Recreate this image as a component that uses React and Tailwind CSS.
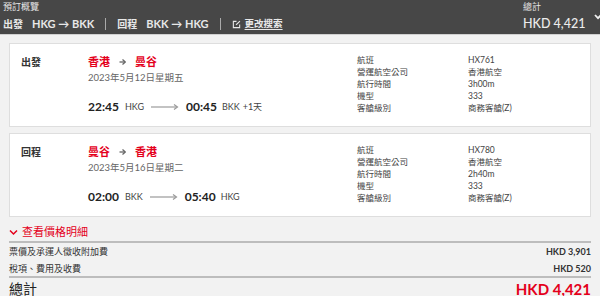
import React from "react";

const font = { fontFamily: 'Lato, "Noto Sans CJK TC", sans-serif' };

function Arrow() {
  return (
    <svg width="28" height="8" viewBox="0 0 28 8" className="mx-[7px]">
      <line x1="0" y1="4" x2="26" y2="4" stroke="#9a9a9a" strokeWidth="1.2" />
      <path d="M23 1.5 L26.5 4 L23 6.5" fill="none" stroke="#9a9a9a" strokeWidth="1.2" />
    </svg>
  );
}

function SmallArrow() {
  return (
    <svg width="7" height="8" viewBox="0 0 7 8" className="mx-[9px]">
      <line x1="0.5" y1="4" x2="6" y2="4" stroke="#666" strokeWidth="1.3" />
      <path d="M3.5 1.5 L6.3 4 L3.5 6.5" fill="none" stroke="#666" strokeWidth="1.3" />
    </svg>
  );
}

function Card({ label, from, to, date, dep, depCode, arr, arrCode, extra, flight, duration }) {
  const rows = [
    ["航班", flight],
    ["營運航空公司", "香港航空"],
    ["航行時間", duration],
    ["機型", "333"],
    ["客艙級別", "商務客艙(Z)"],
  ];
  return (
    <div className="mx-[9px] h-[84px] border border-[#dedede] bg-white flex">
      <div className="w-[78px] pl-[11px] pt-[11px] text-[10px] leading-[14px] font-bold text-[#333]">{label}</div>
      <div className="w-[269px] pt-[10px]">
        <div className="flex items-center text-[11px] leading-[16px] font-bold text-[#e4001b]">
          <span>{from}</span>
          <SmallArrow />
          <span>{to}</span>
        </div>
        <div className="text-[9.5px] leading-[14px] text-[#666] mt-[1px]">{date}</div>
        <div className="flex items-center mt-[14px] h-[16px] text-[#222]">
          <span className="text-[12px] font-bold">{dep}</span>
          <span className="text-[9px] ml-[6px] text-[#444]">{depCode}</span>
          <Arrow />
          <span className="text-[12px] font-bold">{arr}</span>
          <span className="text-[9px] ml-[5px] text-[#444]">{arrCode}</span>
          {extra && <span className="text-[9px] ml-[3px] text-[#444]">{extra}</span>}
        </div>
      </div>
      <div className="pt-[10px] text-[8.5px] leading-[12px] text-[#444]">
        {rows.map(([k, v]) => (
          <div key={k} className="flex">
            <span className="w-[111px]">{k}</span>
            <span>{v}</span>
          </div>
        ))}
      </div>
    </div>
  );
}

export default function App() {
  return (
    <div style={font} className="w-[600px] h-[296px] bg-[#f2f2f2] overflow-hidden">
      <div className="h-[35px] bg-[#474747] flex justify-between border-b border-[#d0d0d0]">
        <div className="pl-[3px] pt-[1px]">
          <div className="text-[9px] leading-[12px] text-[#e6e6e6]">預訂概覽</div>
          <div className="flex items-center mt-[4px] text-[10px] leading-[14px] font-bold text-[#e8e8e8] whitespace-nowrap">
            <span>出發</span>
            <span className="ml-[9px] text-[11px]">HKG → BKK</span>
            <span className="mx-[11px] w-px h-[12px] bg-[#aaa]"></span>
            <span>回程</span>
            <span className="ml-[9px] text-[11px]">BKK → HKG</span>
            <span className="mx-[11px] w-px h-[12px] bg-[#aaa]"></span>
            <svg width="9" height="9" viewBox="0 0 10 10" className="mr-[4px]">
              <path d="M5 1.5 H1.5 V8.5 H8.5 V5" fill="none" stroke="#e8e8e8" strokeWidth="1.2" />
              <path d="M4.5 5.5 L8.8 1.2" stroke="#e8e8e8" strokeWidth="1.3" />
            </svg>
            <span className="underline underline-offset-2 text-[9.5px]">更改搜索</span>
          </div>
        </div>
        <div className="flex w-[77px]">
          <div className="pt-[1px] whitespace-nowrap">
            <div className="text-[9px] leading-[12px] text-[#e6e6e6]">總計</div>
            <div className="mt-[3px] text-[12.5px] leading-[16px] text-[#ececec] font-medium">HKD 4,421</div>
          </div>
          <svg width="8" height="6" viewBox="0 0 8 6" className="ml-[9px] mt-[14px] shrink-0">
            <path d="M1 1 L4 4.2 L7 1" fill="none" stroke="#f0f0f0" strokeWidth="1.8" />
          </svg>
        </div>
      </div>
      <div className="pt-[8px]">
        <Card label="出發" from="香港" to="曼谷" date="2023年5月12日星期五" dep="22:45" depCode="HKG" arr="00:45" arrCode="BKK" extra="+1天" flight="HX761" duration="3h00m" />
        <div className="h-[6px]"></div>
        <Card label="回程" from="曼谷" to="香港" date="2023年5月16日星期二" dep="02:00" depCode="BKK" arr="05:40" arrCode="HKG" flight="HX780" duration="2h40m" />
        <div className="mx-[9px] mt-[7px]">
          <div className="flex items-center h-[16px] text-[11px] text-[#e4001b]">
            <svg width="9" height="7" viewBox="0 0 9 7" className="mr-[4px]">
              <path d="M1 1.5 L4.5 5 L8 1.5" fill="none" stroke="#e4001b" strokeWidth="1.5" />
            </svg>
            <span>查看價格明細</span>
          </div>
          <div className="h-[2px] bg-[#bdbdbd] mt-[1px]"></div>
          <div className="flex justify-between text-[9px] leading-[12px] text-[#333] mt-[3px]">
            <span>票價及承運人徵收附加費</span>
            <span className="font-bold">HKD 3,901</span>
          </div>
          <div className="flex justify-between text-[9px] leading-[12px] text-[#333] mt-[5px]">
            <span>稅項、費用及收費</span>
            <span className="font-bold">HKD 520</span>
          </div>
          <div className="h-[2px] bg-[#bdbdbd] mt-[1px]"></div>
          <div className="flex justify-between items-center mt-[2px] h-[18px] leading-[18px]">
            <span className="text-[14px] text-[#222]">總計</span>
            <span className="text-[15px] font-bold text-[#e4001b]">HKD 4,421</span>
          </div>
        </div>
      </div>
    </div>
  );
}
